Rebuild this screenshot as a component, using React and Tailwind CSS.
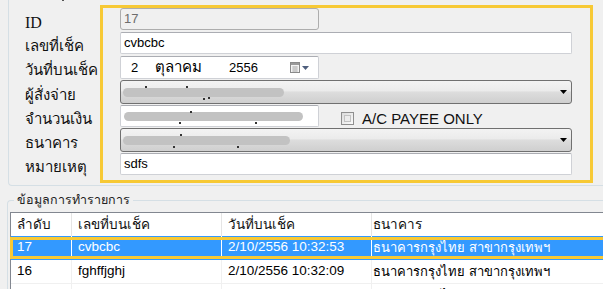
import React from 'react'

const YELLOW = 'border-[#f7c935]'

function Blur({ w, dots = [] }) {
  return (
    <div className="relative h-full flex items-center">
      <div className="h-[9px] rounded-full bg-[#c2c2c2] blur-[0.6px]" style={{ width: w }} />
      {dots.map(([x, y], i) => (
        <span key={i} className="absolute w-[2px] h-[2px] bg-[#333]" style={{ left: x, top: y }} />
      ))}
    </div>
  )
}

function Combo({ children }) {
  return (
    <div className="h-[24px] w-full rounded-[3px] border border-[#707070] bg-[linear-gradient(#f3f3f3_0%,#ebebeb_45%,#dddddd_50%,#cfcfcf_100%)] flex items-center pl-[2px] pr-[3px]">
      <div className="flex-1 h-full">{children}</div>
      <svg width="8" height="5" viewBox="0 0 8 5" className="shrink-0">
        <path d="M0 0h7L3.5 4z" fill="#000" />
      </svg>
    </div>
  )
}

function TextBox({ children, className = '' }) {
  return (
    <div className={`h-[22px] border border-[#cfd1d6] border-t-[#abadb3] rounded-[2px] bg-white flex items-center pl-[3px] text-[13px] text-black ${className}`}>
      {children}
    </div>
  )
}

function CalendarIcon() {
  return (
    <svg width="22" height="12" viewBox="0 0 22 12">
      <rect x="0.5" y="0.5" width="9" height="10" fill="#f4f4f4" stroke="#8a8a8a" />
      <rect x="1" y="1" width="8" height="2" fill="#9a9a9a" />
      <path d="M2 5h6M2 7h6M2 9h6M4 4v6M6 4v6" stroke="#b4b4b4" strokeWidth="0.8" />
      <path d="M12 4h7l-3.5 4z" fill="#4f5f7d" />
    </svg>
  )
}

const labels = [
  ['เลขที่เช็ค', 24, 22],
  ['วันที่บนเช็ค', 24, 23],
  ['ผู้สั่งจ่าย', 25, 24],
  ['จำนวนเงิน', 23, 22],
  ['ธนาคาร', 25, 24],
  ['หมายเหตุ', 22, 22],
]

const rows = [
  ['17', 'cvbcbc', '2/10/2556 10:32:53', 'ธนาคารกรุงไทย สาขากรุงเทพฯ'],
  ['16', 'fghffjghj', '2/10/2556 10:32:09', 'ธนาคารกรุงไทย สาขากรุงเทพฯ'],
  ['15', 'fdsfdsfdd', '2/10/2556 10:31:55', 'ธนาคารกรุงไทย สาขากรุงเทพฯ'],
]

export default function App() {
  return (
    <div className="w-[603px] h-[289px] overflow-hidden bg-[#f0f0f0] font-['Liberation_Sans',sans-serif] text-black">
      {/* cheque details group */}
      <div className="ml-[8px] w-[640px] h-[186px] border-l border-b border-[#d5dfe5] rounded-bl-[4px] flex pt-[5px] relative">
        <span className="absolute left-[53px] -top-[1px] w-[2px] h-[2px] bg-[#555]" />
        <div className="w-[91px] pl-[16px] pt-[3px] flex flex-col shrink-0">
          <div className="h-[24px] pt-[6px] font-['Liberation_Serif',serif] text-[16px] leading-[18px] text-[#111]">ID</div>
          {labels.map(([t, h, fh]) => (
            <div key={t} style={{ height: h }}>
              <div style={{ height: fh }} className="flex items-center whitespace-nowrap text-[#111] text-[15px] pt-[6px]">
                {t}
              </div>
            </div>
          ))}
        </div>

        <div className={`w-[493px] h-[178px] border-[3px] ${YELLOW} pl-[17px] pr-[18px] flex flex-col shrink-0`}>
          <div className="h-[24px]">
            <div className="w-[199px] h-[22px] border border-[#adadad] rounded-[3px] bg-[#f0f0f0] flex items-center pl-[3px] text-[13px] text-[#6d6d6d]">
              17
            </div>
          </div>
          <div className="h-[24px]">
            <TextBox>cvbcbc</TextBox>
          </div>
          <div className="h-[24px]">
            <TextBox className="w-[199px] h-[23px] text-[13.5px]">
              <span className="w-[31px] pl-[7px]">2</span>
              <span className="w-[74px] text-[15px]">ตุลาคม</span>
              <span className="flex-1">2556</span>
              <span className="pr-[6px] pt-[1px]">
                <CalendarIcon />
              </span>
            </TextBox>
          </div>
          <div className="h-[25px]">
            <Combo>
              <Blur w={161} dots={[[22, 5], [63, 5], [80, 17], [85, 16]]} />
            </Combo>
          </div>
          <div className="h-[23px] flex items-start">
            <TextBox className="w-[199px]">
              <Blur w={179} dots={[[66, 5], [55, 16], [131, 16]]} />
            </TextBox>
            <label className="ml-[22px] mt-[6px] flex items-center gap-[8px] text-[15px] text-[#111] leading-none">
              <span className="w-[13px] h-[13px] border border-[#8f8f8f] bg-[linear-gradient(135deg,#dcdcdc,#fbfbfb)] p-[2px]">
                <span className="block w-full h-full border border-[#c2c2c2] bg-[#ececec]" />
              </span>
              A/C PAYEE ONLY
            </label>
          </div>
          <div className="h-[25px]">
            <Combo>
              <Blur w={167} dots={[[57, 5], [50, 17], [114, 17]]} />
            </Combo>
          </div>
          <div className="h-[22px]">
            <TextBox>sdfs</TextBox>
          </div>
        </div>
      </div>

      {/* transactions group */}
      <div className="mt-[14px] ml-[7px] w-[640px] h-[120px] border-t border-l border-[#d5dfe5] rounded-tl-[4px] relative">
        <span className="absolute left-[6px] -top-[10px] px-[3px] bg-[#f0f0f0] text-[12.5px] text-[#222] leading-[18px]">
          ข้อมูลการทำรายการ
        </span>
        <div className="mt-[11px] ml-[2px] border-t border-l border-[#828790] bg-white text-[13.5px]">
          <div className="flex h-[23px] items-center text-[#111]">
            <div className="w-[61px] h-full flex items-center pl-[6px] border-r border-[#e5e5e5] pt-[2px]">ลำดับ</div>
            <div className="w-[150px] h-full flex items-center pl-[6px] border-r border-[#e5e5e5] pt-[2px]">เลขที่บนเช็ค</div>
            <div className="w-[150px] h-full flex items-center pl-[6px] border-r border-[#e5e5e5] pt-[2px]">วันที่บนเช็ค</div>
            <div className="flex-1 h-full flex items-center pl-[1px] pt-[2px]">ธนาคาร</div>
          </div>
          {rows.map((r, i) => {
            const sel = i === 0
            const line = sel ? 'border-white' : 'border-[#f0f0f0]'
            return (
              <div
                key={r[0]}
                className={`relative flex h-[24px] items-center border-b ${sel ? 'bg-[#3399ff] text-white border-[#3399ff]' : 'border-[#f0f0f0]'}`}
              >
                <div className={`w-[61px] h-full flex items-center pl-[6px] border-r ${line}`}>{r[0]}</div>
                <div className={`w-[150px] h-full flex items-center pl-[6px] border-r ${line}`}>{r[1]}</div>
                <div className={`w-[150px] h-full flex items-center pl-[6px] border-r ${line}`}>{r[2]}</div>
                <div className="flex-1 h-full flex items-center pl-[1px] text-[13px]">{r[3]}</div>
                {sel && (
                  <span className={`absolute -left-[1px] right-0 top-[1px] bottom-0 border-[3px] ${YELLOW} pointer-events-none`} />
                )}
              </div>
            )
          })}
        </div>
      </div>
    </div>
  )
}
